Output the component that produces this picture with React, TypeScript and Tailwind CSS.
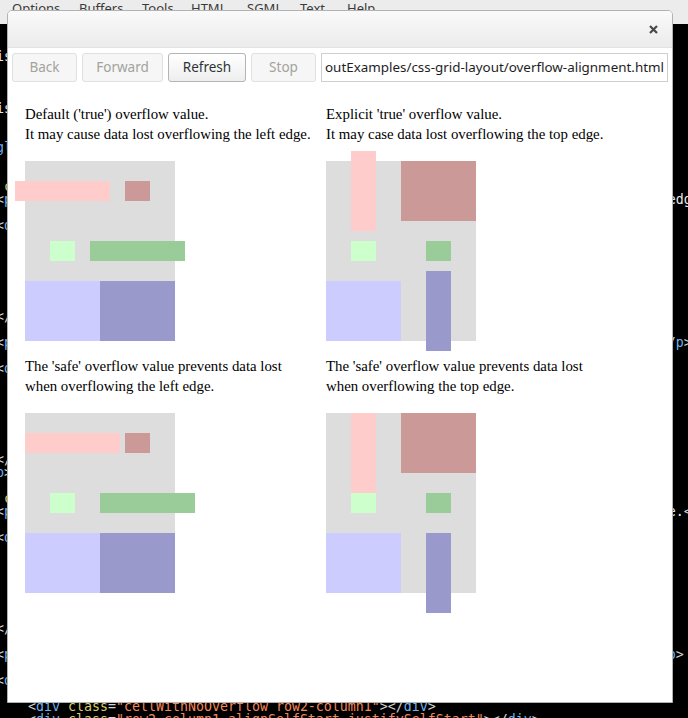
import React from "react";

type Seg = [string, string];

const BR = "text-[#d4d4d4]";
const TAG = "text-[#6db1f0]";
const ATTR = "text-[#d8cf6c]";
const STR = "text-[#f2875c]";
const TXT = "text-[#e8e8e8]";

const t = (s: string): Seg => [s, TXT];
const closeP: Seg[] = [["</", BR], ["p", TAG], [">", BR]];
const pLine = (body: string, col: number, tail: Seg[]): Seg[] => [
  ["<", BR],
  ["p", TAG],
  [">", BR],
  t(body.padEnd(col - 3, " ").slice(0, col - 3)),
  ...tail,
];
const divLine = (cls: string): Seg[] => [
  ["<", BR],
  ["div", TAG],
  [" ", TXT],
  ["class", ATTR],
  ["=", BR],
  ['"' + cls + '"', STR],
  [">", BR],
];
const closeDiv: Seg[] = [["</", BR], ["div", TAG], [">", BR]];
const innerDiv = (cls: string): Seg[] => [
  t("    "),
  ["<", BR],
  ["div", TAG],
  [" ", TXT],
  ["class", ATTR],
  ["=", BR],
  ['"' + cls + '"', STR],
  [">", BR],
  ["</", BR],
  ["div", TAG],
  [">", BR],
];

const LINES: Seg[][] = Array.from({ length: 56 }, () => []);
LINES[2] = [t("is the default value for overflowing grid items.")];
LINES[6] = [t("is used to align the items of the grid.")];
LINES[9] = [["glyph", TAG]];
LINES[12] = [t(" "), ["class", ATTR], ["=", BR], ['"description"', STR], [">", BR]];
LINES[13] = pLine(
  "Default ('true') overflow value. It may cause data lost overflowing the left",
  84,
  [t("edge."), ...closeP]
);
LINES[15] = divLine("grid alignItemsCenter justifyItemsCenter");
LINES[22] = closeDiv;
LINES[24] = pLine(
  "Explicit 'true' overflow value. It may case data lost overflowing the top edge.",
  83,
  closeP
);
LINES[26] = divLine("grid alignItemsCenterTrue justifyItemsCenter");
LINES[33] = closeDiv;
LINES[34] = [["p", TAG], [">", BR]];
LINES[36] = [t(" "), ["class", ATTR], ["=", BR], ['"description"', STR], [">", BR]];
LINES[37] = pLine(
  "The 'safe' overflow value prevents data lost when overflowing the left ed",
  83,
  [t("ge."), ...closeP]
);
LINES[39] = divLine("grid alignItemsCenter justifyItemsCenterSafe");
LINES[46] = closeDiv;
LINES[48] = pLine(
  "The 'safe' overflow value prevents data lost when overflowing the top ed",
  82,
  closeP
);
LINES[50] = divLine("grid alignItemsCenterSafe justifyItemsCenter");
LINES[52] = innerDiv("cellWithNoOverflow row2-column1");
LINES[53] = innerDiv("row2-column1 alignSelfStart justifySelfStart");

const MENU: [string, string][] = [
  ["Options", "w-[67px]"],
  ["Buffers", "w-[63px]"],
  ["Tools", "w-[49px]"],
  ["HTML", "w-[56px]"],
  ["SGML", "w-[53px]"],
  ["Text", "w-[47px]"],
  ["Help", "w-[40px]"],
];

function Button({
  label,
  w,
  enabled,
}: {
  label: string;
  w: string;
  enabled?: boolean;
}) {
  return (
    <div
      className={
        "flex h-[29px] shrink-0 items-center justify-center rounded-[3px] border text-[13.5px] " +
        w +
        " " +
        (enabled
          ? "border-[#b4b4b4] bg-gradient-to-b from-[#ffffff] to-[#eeeeee] text-[#2e3436]"
          : "border-[#e0e0e0] bg-[#f6f6f6] text-[#a3a39d]")
      }
    >
      {label}
    </div>
  );
}

function LeftTrue({ safe }: { safe?: boolean }) {
  const js = safe ? "[justify-self:safe_center]" : "[justify-self:unsafe_center]";
  return (
    <div className="grid h-[180px] w-[150px] grid-cols-[75px_75px] grid-rows-[60px_60px_60px] bg-[#dddddd]">
      <div className={"col-start-1 row-start-1 h-[20px] w-[95px] self-center bg-[#ffcccc] " + js} />
      <div className="col-start-2 row-start-1 h-[20px] w-[25px] self-center justify-self-center bg-[#cc9999]" />
      <div className="col-start-1 row-start-2 h-[20px] w-[25px] self-center justify-self-center bg-[#ccffcc]" />
      <div className={"col-start-2 row-start-2 h-[20px] w-[95px] self-center bg-[#99cc99] " + js} />
      <div className="col-start-1 row-start-3 bg-[#ccccff]" />
      <div className="col-start-2 row-start-3 bg-[#9999cc]" />
    </div>
  );
}

function TopTrue({ safe }: { safe?: boolean }) {
  const as = safe ? "[align-self:safe_center]" : "[align-self:unsafe_center]";
  return (
    <div className="grid h-[180px] w-[150px] grid-cols-[75px_75px] grid-rows-[60px_60px_60px] bg-[#dddddd]">
      <div className={"col-start-1 row-start-1 h-[80px] w-[25px] justify-self-center bg-[#ffcccc] " + as} />
      <div className="col-start-2 row-start-1 bg-[#cc9999]" />
      <div className="col-start-1 row-start-2 h-[20px] w-[25px] self-center justify-self-center bg-[#ccffcc]" />
      <div className="col-start-2 row-start-2 h-[20px] w-[25px] self-center justify-self-center bg-[#99cc99]" />
      <div className="col-start-1 row-start-3 bg-[#ccccff]" />
      <div className={"col-start-2 row-start-3 h-[80px] w-[25px] justify-self-center bg-[#9999cc] " + as} />
    </div>
  );
}

function Cell({ l1, l2, children }: { l1: string; l2: string; children: React.ReactNode }) {
  return (
    <div className="flex flex-col">
      <div className="whitespace-nowrap text-[14.85px] leading-[20px] text-black">
        <div>{l1}</div>
        <div>{l2}</div>
      </div>
      <div className="mt-[17px]">{children}</div>
    </div>
  );
}

export default function App() {
  return (
    <div className="relative h-[718px] w-[688px] overflow-hidden bg-black">
      {/* emacs menubar */}
      <div
        className="flex h-[24px] items-start bg-[#ececec] pl-[12px] text-[13px] leading-[17px] text-[#3a3a3a]"
        style={{ fontFamily: '"Noto Sans", sans-serif' }}
      >
        {MENU.map(([m, w]) => (
          <div key={m} className={"shrink-0 " + w}>
            {m}
          </div>
        ))}
      </div>

      {/* editor buffer */}
      <div
        className="-ml-1 text-[13.29px] leading-[13px]"
        style={{ fontFamily: '"DejaVu Sans Mono", monospace' }}
      >
        {LINES.map((segs, i) => (
          <div key={i} className="h-[13px] whitespace-pre">
            {segs.map(([s, c], j) => (
              <span key={j} className={c}>
                {s}
              </span>
            ))}
          </div>
        ))}
      </div>

      {/* browser dialog window */}
      <div className="absolute left-[7px] top-[10px] flex h-[693px] w-[666px] flex-col overflow-hidden rounded-t-[5px] border border-[#b2b2b2] bg-white">
        <div className="flex h-[37px] shrink-0 items-center justify-end border-b border-[#e3e3e3] bg-gradient-to-b from-[#fafafa] to-[#ebebeb] pr-[14px]">
          <svg width="9" height="9" viewBox="0 0 9 9">
            <path d="M1 1 L8 8 M8 1 L1 8" stroke="#4a4a4a" strokeWidth="2.2" strokeLinecap="butt" />
          </svg>
        </div>
        <div
          className="flex shrink-0 items-center gap-[5px] px-[4px] pt-[5px]"
          style={{ fontFamily: '"Noto Sans", sans-serif' }}
        >
          <Button label="Back" w="w-[65px]" />
          <Button label="Forward" w="w-[81px]" />
          <Button label="Refresh" w="w-[78px]" enabled />
          <Button label="Stop" w="w-[65px]" />
          <div className="flex h-[29px] min-w-0 flex-1 items-center overflow-hidden border border-[#cfcfcf] bg-white pl-[3px] text-[13.4px] text-[#1e1e1e]">
            <span className="whitespace-nowrap">outExamples/css-grid-layout/overflow-alignment.html</span>
          </div>
        </div>
        <div
          className="grid grid-cols-[301px_301px] gap-y-[15px] pl-[17px] pt-[22px]"
          style={{ fontFamily: '"Liberation Serif", serif' }}
        >
          <Cell l1="Default ('true') overflow value." l2="It may cause data lost overflowing the left edge.">
            <LeftTrue />
          </Cell>
          <Cell l1="Explicit 'true' overflow value." l2="It may case data lost overflowing the top edge.">
            <TopTrue />
          </Cell>
          <Cell l1="The 'safe' overflow value prevents data lost" l2="when overflowing the left edge.">
            <LeftTrue safe />
          </Cell>
          <Cell l1="The 'safe' overflow value prevents data lost" l2="when overflowing the top edge.">
            <TopTrue safe />
          </Cell>
        </div>
      </div>
    </div>
  );
}
